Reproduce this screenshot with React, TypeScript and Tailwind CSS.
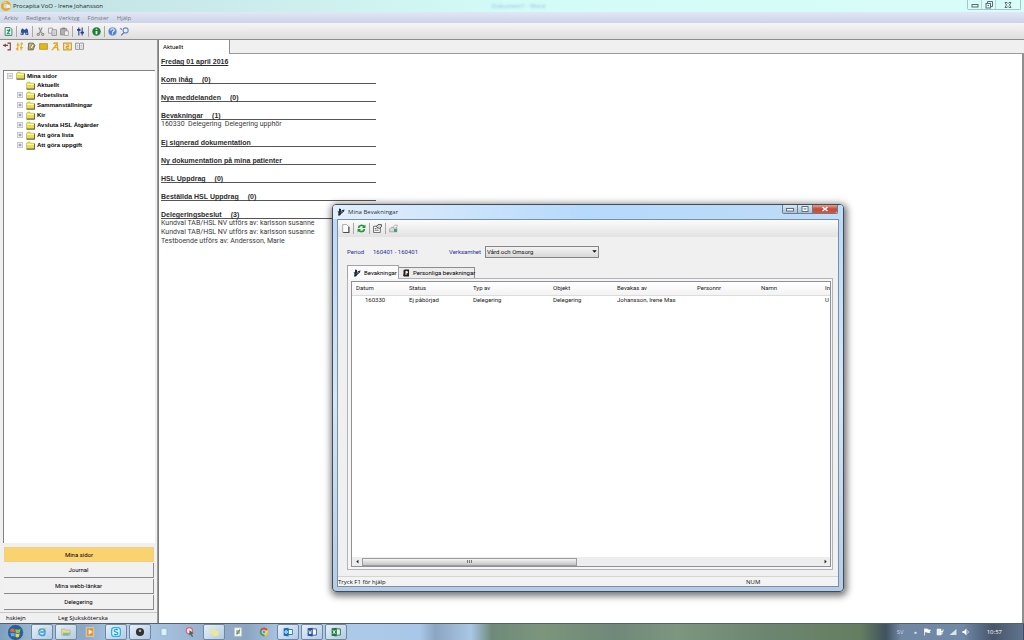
import type { ReactNode } from "react";

const menuItems = ["Arkiv", "Redigera", "Verktyg", "Fönster", "Hjälp"];

const treeItems = [
  { label: "Aktuellt", expandable: false },
  { label: "Arbetslista", expandable: true },
  { label: "Sammanställningar", expandable: true },
  { label: "Kir", expandable: true },
  { label: "Avsluta HSL Åtgärder", expandable: true },
  { label: "Att göra lista", expandable: true },
  { label: "Att göra uppgift", expandable: true },
];

const navItems = ["Mina sidor", "Journal", "Mina webb-länkar", "Delegering"];

const sections: { title: string; count?: number; rows?: string[] }[] = [
  { title: "Kom ihåg", count: 0 },
  { title: "Nya meddelanden", count: 0 },
  { title: "Bevakningar", count: 1, rows: ["160330  Delegering  Delegering upphör"] },
  { title: "Ej signerad dokumentation" },
  { title: "Ny dokumentation på mina patienter" },
  { title: "HSL Uppdrag", count: 0 },
  { title: "Beställda HSL Uppdrag", count: 0 },
  {
    title: "Delegeringsbeslut",
    count: 3,
    rows: [
      "Kundval TAB/HSL NV utförs av: karlsson susanne",
      "Kundval TAB/HSL NV utförs av: karlsson susanne",
      "Testboende utförs av: Andersson, Marie",
    ],
  },
];

const columns = [
  { label: "Datum", width: "w-[53px]", value: "160330" },
  { label: "Status", width: "w-[64px]", value: "Ej påbörjad" },
  { label: "Typ av", width: "w-[80px]", value: "Delegering" },
  { label: "Objekt", width: "w-[64px]", value: "Delegering" },
  { label: "Bevakas av", width: "w-[80px]", value: "Johansson, Irene Mas" },
  { label: "Personnr", width: "w-[64px]", value: "" },
  { label: "Namn", width: "w-[64px]", value: "" },
  { label: "In", width: "w-auto", value: "U" },
];

function Icon({ children, size = "size-[9px]" }: { children: ReactNode; size?: string }) {
  return (
    <svg viewBox="0 0 16 16" className={`${size} shrink-0`} fill="none" aria-hidden="true">
      {children}
    </svg>
  );
}

function ToolButton({ label, children }: { label: string; children: ReactNode }) {
  return (
    <button type="button" aria-label={label} className="flex size-[9px] shrink-0 items-center justify-center">
      {children}
    </button>
  );
}

function Separator() {
  return <span className="h-[11px] w-px shrink-0 bg-[#a9a9a9]" />;
}

function Folder() {
  return (
    <Icon>
      <path d="M1 14V4l2-2h4l1 2h7v10z" fill="#e6df55" stroke="#a5a040" />
      <path d="M2 6h12" stroke="#fffbb0" strokeWidth="2" />
      <path d="M1 14.5h14.5V5" stroke="#3c3a1e" strokeWidth="1.5" />
    </Icon>
  );
}

function Expander({ open }: { open?: boolean }) {
  return (
    <Icon size="size-[6px]">
      <rect x="1" y="1" width="14" height="14" fill="#f4f4f6" stroke="#b8bbc6" strokeWidth="2" />
      <path d={open ? "M4 8h8" : "M4 8h8M8 4v8"} stroke="#6b7496" strokeWidth="2" />
    </Icon>
  );
}

function PersonMark() {
  return (
    <Icon size="size-[8px]">
      <path d="M4 1l4 1v4l3-2 4-1-1 4-5 4-3 4H2l1-5-2-4 3 1z" fill="#1d2b38" />
      <path d="M8 9l3-3" stroke="#dce9f5" strokeWidth="1.5" />
    </Icon>
  );
}

function AppTitleBar() {
  return (
    <header className="flex h-[12px] shrink-0 items-center bg-linear-to-r from-[#c3dfe3] via-[#d3fbf7] to-[#d9fdf9] pl-px">
      <Icon size="size-[10px]">
        <circle cx="8" cy="8" r="6" stroke="#f0a21c" strokeWidth="4" />
        <path d="M9 6h6v5H9z" fill="#e8f6f5" />
        <path d="M3 4a6 6 0 0 1 6-2" stroke="#fbd36c" strokeWidth="2" />
      </Icon>
      <h1 className="ml-[2px] flex-1 font-['Open_Sans',sans-serif] text-[6px] leading-[10px] text-[#1b2326]">
        Procapita VoO - Irene Johansson
      </h1>
      <span className="font-['Open_Sans',sans-serif] text-[6px] leading-[10px] text-[#8fbfe6] blur-[1px]">
        Dokument1 - Word
      </span>
      <div className="flex flex-1 justify-end self-start">
        <div className="mr-[3px] flex h-[10px] rounded-b-[2px] border border-t-0 border-[#a8c4c5] text-[#5d6d77]">
          <button type="button" aria-label="Minimera" className="flex w-[14px] items-center justify-center border-r border-[#bcd6d6]">
            <Icon size="size-[8px]">
              <rect x="2" y="7" width="12" height="5" stroke="currentColor" strokeWidth="2" />
            </Icon>
          </button>
          <button type="button" aria-label="Återställ" className="flex w-[14px] items-center justify-center border-r border-[#bcd6d6]">
            <Icon size="size-[8px]">
              <path d="M5 4V1h10v10h-3" stroke="currentColor" strokeWidth="2" />
              <rect x="2" y="5" width="9" height="9" stroke="currentColor" strokeWidth="2" />
              <path d="M5 9h3" stroke="currentColor" strokeWidth="2" />
            </Icon>
          </button>
          <button type="button" aria-label="Stäng" className="flex w-[24px] items-center justify-center">
            <Icon size="size-[8px]">
              <path d="M2 3h4l2 2 2-2h4l-3 5 3 5h-4l-2-2-2 2H2l3-5z" stroke="currentColor" strokeWidth="2" />
            </Icon>
          </button>
        </div>
      </div>
    </header>
  );
}

function MainToolbar() {
  return (
    <div className="flex h-[17px] shrink-0 items-center gap-[3px] border-b border-[#8d8d8d] bg-linear-to-b from-[#f7f4f5] to-[#dedede] pl-1">
      <ToolButton label="Uppdatera">
        <Icon>
          <path d="M2 1h9l3 3v11H2z" fill="#eef6f4" stroke="#2d7474" strokeWidth="1.5" />
          <path d="M5 6h5l-4 6h5M10 3v5" stroke="#1f9c55" strokeWidth="2" />
        </Icon>
      </ToolButton>
      <Separator />
      <ToolButton label="Sök">
        <Icon>
          <path d="M1 14l1-9 3-3 2 3h2l2-3 3 3 1 9h-5l-1-4H7l-1 4z" fill="#2c4f9e" />
          <path d="M3 10v3M12 10v3" stroke="#b9cbf2" strokeWidth="2" />
        </Icon>
      </ToolButton>
      <Separator />
      <ToolButton label="Klipp ut">
        <Icon>
          <path d="M5 1l5 10M11 1L6 11" stroke="#8c8c8c" strokeWidth="2" />
          <circle cx="4" cy="13" r="2" stroke="#8c8c8c" strokeWidth="2" />
          <circle cx="12" cy="13" r="2" stroke="#8c8c8c" strokeWidth="2" />
        </Icon>
      </ToolButton>
      <ToolButton label="Kopiera">
        <Icon>
          <path d="M1 2h7v9H1z" fill="#f3f3f3" stroke="#959595" strokeWidth="1.5" />
          <path d="M7 5h8v10H7z" fill="#e5e5e5" stroke="#8a8a8a" strokeWidth="1.5" />
          <path d="M9 9h4M9 12h4" stroke="#959595" />
        </Icon>
      </ToolButton>
      <ToolButton label="Klistra in">
        <Icon>
          <path d="M1 3h11v11H1z" fill="#b3b3b3" stroke="#858585" strokeWidth="1.5" />
          <path d="M4 1h5v3H4z" fill="#858585" />
          <path d="M8 7h7v8H8z" fill="#eee" stroke="#858585" />
        </Icon>
      </ToolButton>
      <Separator />
      <ToolButton label="Inställningar">
        <Icon>
          <path d="M5 1v14M11 1v14" stroke="#2b4795" strokeWidth="2" />
          <path d="M2 5h6M8 10h6" stroke="#1e3a86" strokeWidth="3" />
        </Icon>
      </ToolButton>
      <Separator />
      <ToolButton label="Information">
        <Icon>
          <circle cx="8" cy="8" r="7.5" fill="#198234" />
          <path d="M8 7v6M8 3v2" stroke="#fff" strokeWidth="3" />
        </Icon>
      </ToolButton>
      <Separator />
      <ToolButton label="Hjälp">
        <Icon>
          <circle cx="8" cy="8" r="7" fill="#4b7fd0" stroke="#8fa9d8" />
          <path d="M5 6c0-4 6-4 6 0 0 2-3 2-3 4M8 11v2" stroke="#fff" strokeWidth="2" />
        </Icon>
      </ToolButton>
      <ToolButton label="Hjälp om">
        <Icon>
          <circle cx="10" cy="6" r="4.5" fill="#e7effc" stroke="#6b8cc4" strokeWidth="2" />
          <path d="M1 2l2 3M7 10l-5 5" stroke="#5475b0" strokeWidth="2" />
        </Icon>
      </ToolButton>
    </div>
  );
}

function SideToolbar() {
  return (
    <div className="flex h-[12px] shrink-0 items-center gap-[3px] pl-[3px]">
      <ToolButton label="Fäst panel">
        <Icon>
          <path d="M0 6h9M8 2h5v12H8M4 3v6" stroke="#7b4340" strokeWidth="2" />
        </Icon>
      </ToolButton>
      <ToolButton label="Sortera">
        <Icon>
          <path d="M5 1v14M11 1v14M2 11l3 4M14 4l-3-3M3 5h5M9 10h5" stroke="#e2ab2b" strokeWidth="2" />
        </Icon>
      </ToolButton>
      <ToolButton label="Redigera sida">
        <Icon>
          <path d="M3 2h8l3 4-3 8H2z" fill="#c9b96e" stroke="#615c50" strokeWidth="1.5" />
          <path d="M5 11l5-8 3 2-4 7z" fill="#fff4b7" stroke="#53514a" />
        </Icon>
      </ToolButton>
      <ToolButton label="Mapp">
        <Icon>
          <path d="M1 3h14v10H1z" fill="#dfb91d" stroke="#b59621" strokeWidth="1.5" />
        </Icon>
      </ToolButton>
      <ToolButton label="Teckensnitt">
        <Icon>
          <path d="M1 14c3 0 7-8 10-12l1 12h3M4 10h8M4 3c2-2 4-1 7-1" stroke="#dfaa2d" strokeWidth="2.5" />
        </Icon>
      </ToolButton>
      <ToolButton label="Kalender">
        <Icon>
          <path d="M1 2h14v12H1z" fill="#f7e5a6" stroke="#cda23a" strokeWidth="2" />
          <path d="M6 5h4v3H6v3h5" stroke="#c28b2a" strokeWidth="1.5" />
        </Icon>
      </ToolButton>
      <ToolButton label="Bok">
        <Icon>
          <path d="M1 2h6l1 1 1-1h6v11H9l-1 1-1-1H1zM8 3v10" fill="#f3f3f3" stroke="#858585" strokeWidth="1.5" />
          <path d="M3 6h3M10 6h3M3 9h3M10 9h3" stroke="#858585" />
        </Icon>
      </ToolButton>
    </div>
  );
}

function SidePanel() {
  return (
    <aside className="flex w-[158px] shrink-0 flex-col border-r border-[#9a9a9a] bg-[#f0f0f0]">
      <SideToolbar />
      <nav
        aria-label="Träd"
        className="mt-[18px] mr-[2px] ml-[3px] flex-1 border-t border-l border-[#828282] bg-white pl-[3px] font-['Liberation_Sans',Arial,sans-serif] text-[6px] leading-[8px] font-bold text-black"
      >
        <div className="flex h-[9px] items-center">
          <Expander open />
          <span className="ml-[3px] flex items-center gap-[2px]">
            <Folder />
            Mina sidor
          </span>
        </div>
        <ul>
          {treeItems.map((item) => (
            <li key={item.label} className="flex h-[10px] items-center pl-[10px]">
              <span className="flex w-[9px]">{item.expandable && <Expander />}</span>
              <span className="flex items-center gap-[2px]">
                <Folder />
                {item.label}
              </span>
            </li>
          ))}
        </ul>
      </nav>
      <div className="mt-[4px] mr-[3px] ml-[4px] flex flex-col gap-px">
        {navItems.map((label, i) => (
          <button
            key={label}
            type="button"
            className={
              i === 0
                ? "h-[15px] border border-[#ecd08a] bg-[#fad26e] text-[6px] leading-[8px]"
                : "h-[15px] border-r border-b border-[#8b8b8b] bg-[#f1f1f1] text-[6px] leading-[8px]"
            }
          >
            {label}
          </button>
        ))}
      </div>
      <div className="mt-[2px] flex h-[11px] items-center border-t border-[#c9c9c9] pl-[6px] font-['Open_Sans',sans-serif] text-[6px] leading-[8px]">
        <span className="w-[52px]">hskiejn</span>
        <span>Leg Sjuksköterska</span>
      </div>
    </aside>
  );
}

function StartPage() {
  return (
    <main className="flex min-w-0 flex-1 flex-col border-l border-[#7c7c7c] bg-white">
      <div className="flex h-[14px] shrink-0 border-b border-[#9b9b9b] bg-[#f0f0f0]">
        <button type="button" className="-mb-px w-[71px] border-r border-[#8d8d8d] bg-white pl-1 text-left text-[6px] leading-[8px]">
          Aktuellt
        </button>
      </div>
      <div className="flex-1 border-r-2 border-[#8f8f8f] pt-[3px] pl-[2px] text-[7px] leading-[9px] text-[#3a3a3a]">
        <h2 className="font-['Liberation_Sans',Arial,sans-serif] font-bold text-[#2d2d2d] underline">
          Fredag 01 april 2016
        </h2>
        {sections.map((section) => (
          <section key={section.title} className="mt-[9px]">
            <h3 className="flex h-[9px] w-[215px] items-center border-b border-[#555] font-['Liberation_Sans',Arial,sans-serif] font-bold text-[#2d2d2d]">
              <span>{section.title}</span>
              {section.count !== undefined && <span className="ml-[9px]">({section.count})</span>}
            </h3>
            {section.rows?.map((row, i) => (
              <p key={i} className="whitespace-pre">
                {row}
              </p>
            ))}
          </section>
        ))}
      </div>
    </main>
  );
}

function DialogToolbar() {
  return (
    <div className="flex h-[17px] shrink-0 items-center gap-[3px] bg-linear-to-b from-[#fbfbfb] to-[#e2e2e2] pl-[3px]">
      <ToolButton label="Ny">
        <Icon>
          <path d="M3 1h7l4 4v10H3z" fill="#fff" stroke="#9b9b9b" strokeWidth="1.5" />
          <path d="M14 5v10H4" stroke="#4b4b4b" strokeWidth="2" />
        </Icon>
      </ToolButton>
      <Separator />
      <ToolButton label="Uppdatera bevakningar">
        <Icon>
          <path d="M3 7c0-5 7-6 10-2M13 9c0 5-7 6-10 2" stroke="#1e963b" strokeWidth="3" />
          <path d="M15 1v6H9zM1 15V9h6z" fill="#1e963b" />
        </Icon>
      </ToolButton>
      <Separator />
      <ToolButton label="Egenskaper">
        <Icon>
          <path d="M1 4h12v11H1z" fill="#fff" stroke="#555" strokeWidth="1.5" />
          <path d="M3 8h3M3 11h7M8 8l3-3" stroke="#555" strokeWidth="1.5" />
          <path d="M6 5l3-4h6v4l-4 3z" fill="#ddd" stroke="#444" strokeWidth="1.5" />
        </Icon>
      </ToolButton>
      <Separator />
      <ToolButton label="Skriv ut">
        <Icon>
          <path d="M1 9l3-3h10v8H1z" fill="#d6d9d6" stroke="#878c88" />
          <path d="M7 7l3-5h5l-2 5z" fill="#fff" stroke="#878c88" />
          <path d="M9 9h5v5H9z" fill="#3b9974" />
        </Icon>
      </ToolButton>
    </div>
  );
}

function WatchTable() {
  return (
    <div className="flex flex-1 flex-col overflow-hidden border border-[#8c9099] bg-white">
      <div className="min-h-0 flex-1 overflow-hidden">
        <table className="w-full table-fixed border-collapse text-[6px] leading-[8px] whitespace-nowrap text-[#222]">
          <thead className="bg-linear-to-b from-white to-[#f3f3f4]">
            <tr className="h-[13px] border-b border-[#dcdcdc]">
              {columns.map((col) => (
                <th key={col.label} scope="col" className={`${col.width} pl-1 text-left font-normal`}>
                  {col.label}
                </th>
              ))}
            </tr>
          </thead>
          <tbody>
            <tr className="h-[9px]">
              {columns.map((col, i) => (
                <td key={col.label} className={i === 0 ? "pl-[13px]" : "pl-1"}>
                  {col.value}
                </td>
              ))}
            </tr>
          </tbody>
        </table>
      </div>
      <div className="flex h-[9px] shrink-0 items-center bg-[#ededed]">
        <button type="button" aria-label="Rulla vänster" className="flex w-[10px] justify-center">
          <Icon size="size-[5px]">
            <path d="M11 2v12L4 8z" fill="#222" />
          </Icon>
        </button>
        <div className="flex-1">
          <div className="flex h-[8px] w-[47%] items-center justify-center gap-px border border-[#9c9c9c] bg-linear-to-b from-[#f4f4f4] to-[#c4c4c6]">
            <span className="h-[3px] w-px bg-[#777]" />
            <span className="h-[3px] w-px bg-[#777]" />
            <span className="h-[3px] w-px bg-[#777]" />
          </div>
        </div>
        <button type="button" aria-label="Rulla höger" className="flex w-[10px] justify-center">
          <Icon size="size-[5px]">
            <path d="M5 2v12l7-6z" fill="#222" />
          </Icon>
        </button>
      </div>
    </div>
  );
}

function WatchDialog() {
  return (
    <div
      role="dialog"
      aria-label="Mina Bevakningar"
      className="absolute top-[204px] right-[180px] bottom-[48px] left-[332px] flex flex-col rounded-[4px] border border-[#3e4d5a] bg-linear-to-b from-[#b9d9f8] via-[#d5e7f8] to-[#b4cce6] px-[4px] pb-[4px] shadow-[1px_2px_7px_2px_rgba(0,0,0,0.55)]"
    >
      <div className="-mx-[4px] flex h-[14px] shrink-0 items-center rounded-t-[3px] bg-linear-to-r from-[#e3effb] via-[#b5d9fc] to-[#bfdcf8] px-[4px]">
        <PersonMark />
        <h2 className="ml-[3px] font-['Open_Sans',sans-serif] text-[6px] leading-[10px] text-[#26333f]">Mina Bevakningar</h2>
        <span className="flex-1" />
        <div className="mr-px flex h-[9px] self-start rounded-b-[2px] border border-t-0 border-[#6c7f92] text-[#5c6f82]">
          <button type="button" aria-label="Minimera Mina Bevakningar" className="flex w-[15px] items-center justify-center border-r border-[#6c7f92] bg-linear-to-b from-[#dce8f3] to-[#a9c0d7]">
            <Icon size="size-[8px]">
              <rect x="1" y="7" width="14" height="5" fill="#fff" stroke="currentColor" strokeWidth="2" />
            </Icon>
          </button>
          <button type="button" aria-label="Maximera Mina Bevakningar" className="flex w-[15px] items-center justify-center border-r border-[#6c7f92] bg-linear-to-b from-[#dce8f3] to-[#a9c0d7]">
            <Icon size="size-[8px]">
              <rect x="2" y="3" width="12" height="10" fill="#fff" stroke="currentColor" strokeWidth="2" />
              <rect x="6" y="7" width="4" height="2" stroke="currentColor" />
            </Icon>
          </button>
          <button type="button" aria-label="Stäng Mina Bevakningar" className="flex w-[24px] items-center justify-center rounded-br-[2px] bg-linear-to-b from-[#e0a292] via-[#c64a35] to-[#d4553f]">
            <Icon size="size-[8px]">
              <path d="M3 4l10 8M13 4L3 12" stroke="#fff" strokeWidth="3" />
            </Icon>
          </button>
        </div>
      </div>
      <div className="flex min-h-0 flex-1 flex-col border border-[#7890a6] bg-[#f0f0f0]">
        <DialogToolbar />
        <div className="mt-[8px] flex h-[13px] shrink-0 items-center pl-[9px] text-[6px] leading-[8px] text-[#2d2d8f]">
          <span className="w-[26px]">Period</span>
          <span className="w-[76px]">160401 - 160401</span>
          <label htmlFor="verksamhet" className="w-[36px]">
            Verksamhet
          </label>
          <span className="relative flex">
            <select
              id="verksamhet"
              className="h-[12px] w-[114px] appearance-none border border-[#858585] bg-linear-to-b from-[#f4f4f4] to-[#d8d8d8] pl-px text-[6px] leading-[8px] text-[#111]"
            >
              <option>Vård och Omsorg</option>
            </select>
            <span className="pointer-events-none absolute inset-y-0 right-[2px] flex items-center">
              <Icon size="size-[5px]">
                <path d="M1 4h14l-7 8z" fill="#111" />
              </Icon>
            </span>
          </span>
        </div>
        <div role="tablist" className="mt-[7px] ml-[9px] flex h-[13px] shrink-0 items-end text-[6px] leading-[8px]">
          <button
            type="button"
            role="tab"
            aria-selected="true"
            className="relative z-10 -mb-px flex h-[14px] w-[52px] items-center gap-[3px] border border-b-0 border-[#a3a3a3] bg-[#fbfbfb] pl-[5px] whitespace-nowrap"
          >
            <PersonMark />
            Bevakningar
          </button>
          <button
            type="button"
            role="tab"
            aria-selected="false"
            className="flex h-[11px] w-[76px] items-center gap-[3px] border border-b-0 border-l-0 border-[#8e8e8e] bg-[#ececec] pl-[3px] whitespace-nowrap"
          >
            <Icon size="size-[8px]">
              <path d="M3 2l4-1h7v14H4l-2-2 1-3z" fill="#222" />
              <path d="M7 4h4l1 4-3 1v3H7z" fill="#f3f3f3" />
            </Icon>
            Personliga bevakningar
          </button>
        </div>
        <div className="mr-[5px] ml-[9px] flex min-h-0 flex-1 border border-[#b3b3b3] bg-[#f6f6f6] py-[2px] pr-px pl-[3px]">
          <WatchTable />
        </div>
        <div className="mt-[6px] flex h-[10px] shrink-0 items-center border-t border-[#d3d3d3] bg-[#f3f3f3] font-['Open_Sans',sans-serif] text-[6px] leading-[8px] text-[#111]">
          <span>Tryck F1 för hjälp</span>
          <span className="flex-1" />
          <span className="w-[92px]">NUM</span>
        </div>
      </div>
    </div>
  );
}

const taskGroups: { label: string; open: boolean; art: ReactNode }[][] = [
  [
    {
      label: "Internet Explorer",
      open: true,
      art: (
        <>
          <path d="M13 10c-1 5-10 5-10-2s10-6 10 0H5" stroke="#3fa0d8" strokeWidth="2.5" />
          <path d="M1 13C3 6 11 0 15 3" stroke="#b3c86c" strokeWidth="1.5" />
        </>
      ),
    },
    {
      label: "Utforskaren",
      open: true,
      art: (
        <>
          <path d="M1 3h5l1 2h8v8H1z" fill="#edd98a" stroke="#b9b179" />
          <path d="M3 9h12l-3 5H3z" fill="#7fb8a8" />
        </>
      ),
    },
    {
      label: "Mediespelaren",
      open: false,
      art: (
        <>
          <path d="M2 1h12v14H2z" fill="#ed9430" stroke="#dce7f2" />
          <path d="M6 4v8l6-4z" fill="#fff" />
        </>
      ),
    },
  ],
  [
    {
      label: "Skype",
      open: true,
      art: (
        <>
          <rect x="1" y="1" width="14" height="14" rx="4" fill="#d8f1fc" stroke="#32aee0" strokeWidth="2" />
          <path d="M11 5c-2-2-6-1-6 1s6 2 6 4-4 3-6 1" stroke="#1b9fda" strokeWidth="2" />
        </>
      ),
    },
    {
      label: "Kamera",
      open: true,
      art: (
        <>
          <circle cx="8" cy="8" r="6.5" fill="#333" />
          <circle cx="8" cy="6" r="2" fill="#bbb" />
        </>
      ),
    },
    {
      label: "Anteckningar",
      open: false,
      art: (
        <>
          <path d="M3 2h10v12H3z" fill="#bfe0f1" stroke="#8cabc4" />
          <path d="M5 5h6M5 8h6M5 11h6" stroke="#fff" strokeWidth="1.5" />
        </>
      ),
    },
  ],
  [
    {
      label: "Skärmklippverktyg",
      open: false,
      art: (
        <>
          <circle cx="7" cy="6" r="5" fill="#f1e9ec" stroke="#d86a70" strokeWidth="2" />
          <path d="M7 5l7 5-3 1 2 4-2 1-2-4-2 2z" fill="#555f69" />
        </>
      ),
    },
    {
      label: "Fästisar",
      open: true,
      art: (
        <>
          <path d="M1 2h9v9H1z" fill="#d9e8c0" />
          <path d="M6 6h9v8H6z" fill="#f2e985" />
        </>
      ),
    },
    {
      label: "Procapita",
      open: false,
      art: (
        <>
          <path d="M2 1h12v14H2z" fill="#f4f6f5" stroke="#a4b7bd" />
          <path d="M5 5h6v6H5z" fill="#aab77e" />
          <path d="M6 12l5-8" stroke="#5f8b89" strokeWidth="2" />
        </>
      ),
    },
  ],
  [
    {
      label: "Chrome",
      open: false,
      art: (
        <>
          <circle cx="8" cy="8" r="7" fill="#49a257" />
          <path d="M8 8L2 4a7 7 0 0 1 12 0z" fill="#d94f43" />
          <path d="M8 8l6-4a7 7 0 0 1-5 11z" fill="#edc94b" />
          <circle cx="8" cy="8" r="3" fill="#5c93dc" stroke="#fff" />
        </>
      ),
    },
    {
      label: "Outlook",
      open: true,
      art: (
        <>
          <path d="M8 4h7v8H8z" fill="#fff" stroke="#1976bd" strokeWidth="1.5" />
          <path d="M1 2l8-1v14l-8-1z" fill="#1473bd" />
          <circle cx="5" cy="8" r="2" stroke="#fff" strokeWidth="1.5" />
        </>
      ),
    },
    {
      label: "Word",
      open: true,
      art: (
        <>
          <path d="M8 3h7v10H8z" fill="#fff" stroke="#365b9f" strokeWidth="1.5" />
          <path d="M1 2l8-1v14l-8-1z" fill="#2a5298" />
          <path d="M3 5l1 6 1-4 1 4 1-6" stroke="#fff" strokeWidth="1.2" />
        </>
      ),
    },
    {
      label: "Excel",
      open: true,
      art: (
        <>
          <path d="M8 3h7v10H8z" fill="#e6f2ea" stroke="#277b48" strokeWidth="1.5" />
          <path d="M1 2l8-1v14l-8-1z" fill="#1f7a43" />
          <path d="M3 5l4 6M7 5l-4 6" stroke="#fff" strokeWidth="1.5" />
        </>
      ),
    },
  ],
];

function Taskbar() {
  return (
    <footer className="flex h-[17px] shrink-0 items-center border-t border-[#55616c] bg-[linear-gradient(90deg,#7fa0bf_0%,#a6c3e0_5%,#8ba7c4_8%,#b2cdea_12%,#8aa4c1_24%,#b0cbe9_28%,#a9c7e8_41%,#8ba5c2_42.5%,#a9c7e6_46%,#6f8a7a_48%,#7c957c_53%,#6f8879_60%,#7d9680_66%,#6c8570_75%,#657e60_84%,#41525f_86.5%,#7088a4_88%,#7089a6_94%,#47566c_97%,#62758e_100%)]">
      <button type="button" aria-label="Start" className="flex w-[31px] justify-center">
        <svg viewBox="0 0 20 20" className="size-[17px]" fill="none" aria-hidden="true">
          <circle cx="10" cy="10" r="9.5" fill="#2c5f94" stroke="#8fb6d9" />
          <path d="M4 6c2-1 3-1 5 0v4c-2-1-3-1-5 0z" fill="#e8653a" />
          <path d="M10 6c2 1 4 1 6 0l-1 4c-2 1-3 1-5 0z" fill="#92c653" />
          <path d="M4 11c2-1 3-1 5 0v4c-2-1-3-1-4 0z" fill="#51b3e8" />
          <path d="M10 11c2 1 3 1 5 0l-1 4c-2 1-2 1-4 0z" fill="#f6cf45" />
        </svg>
      </button>
      <div className="flex h-full gap-[4px]">
        {taskGroups.map((group, i) => (
          <div key={i} className="flex h-full gap-[2px]">
            {group.map((task) => (
              <button
                key={task.label}
                type="button"
                aria-label={task.label}
                className={
                  task.open
                    ? "flex w-[22px] items-center justify-center rounded-[2px] border border-[#70879e] bg-linear-to-br from-[#e6f0fa] to-[#b3cbe4]"
                    : "flex w-[22px] items-center justify-center"
                }
              >
                <Icon size="size-[10px]">{task.art}</Icon>
              </button>
            ))}
          </div>
        ))}
      </div>
      <span className="flex-1" />
      <div className="flex items-center gap-[5px] pr-[21px] font-['Open_Sans',sans-serif] text-[6px] leading-[8px] text-white">
        <span className="mr-[4px] text-[#c9d6e6]">SV</span>
        <Icon size="size-[5px]">
          <path d="M2 11h12L8 5z" fill="#e9f1fa" />
        </Icon>
        <Icon size="size-[8px]">
          <path d="M3 1v14M4 2h5l1 2h5l-2 3 1 2H9L8 8H4z" fill="#fff" stroke="#fff" strokeWidth="1.5" />
        </Icon>
        <Icon size="size-[8px]">
          <path d="M2 2h8v12H2z" fill="#e8edf3" stroke="#fff" />
          <path d="M9 3v4h5V3M12 7v5H8" stroke="#fff" strokeWidth="2" />
        </Icon>
        <Icon size="size-[8px]">
          <path d="M1 14L15 2v12z" fill="#dbe4ee" />
        </Icon>
        <Icon size="size-[8px]">
          <path d="M1 6h3l5-5v14l-5-5H1z" fill="#fff" />
          <path d="M11 5c2 1 2 5 0 6" stroke="#fff" strokeWidth="1.5" />
        </Icon>
        <span className="ml-[12px]">10:57</span>
      </div>
      <span className="h-full w-px bg-[#3d4c5e]" />
    </footer>
  );
}

export default function App() {
  return (
    <div className="relative flex h-screen flex-col overflow-hidden bg-[#f0f0f0] font-['Roboto',sans-serif] text-black">
      <AppTitleBar />
      <nav
        aria-label="Meny"
        className="flex h-[11px] shrink-0 items-center gap-2 bg-linear-to-b from-[#e2e7f5] to-[#ccd4e6] pl-1 font-['Open_Sans',sans-serif] text-[6px] leading-[8px] text-[#75787f]"
      >
        {menuItems.map((item) => (
          <button key={item} type="button">
            {item}
          </button>
        ))}
      </nav>
      <MainToolbar />
      <div className="flex min-h-0 flex-1">
        <SidePanel />
        <StartPage />
      </div>
      <WatchDialog />
      <Taskbar />
    </div>
  );
}
